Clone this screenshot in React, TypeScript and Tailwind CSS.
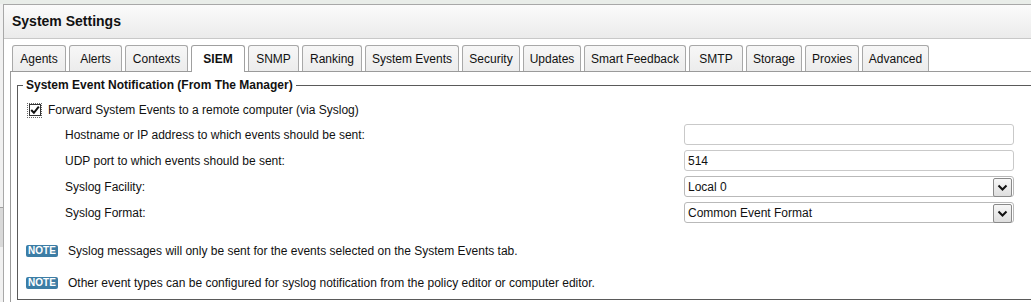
import React from "react";

const tabs = [
  { label: "Agents", w: "w-[54px]" },
  { label: "Alerts", w: "w-[53px]" },
  { label: "Contexts", w: "w-[63px]" },
  { label: "SIEM", w: "w-[54px]", active: true },
  { label: "SNMP", w: "w-[51px]" },
  { label: "Ranking", w: "w-[60px]" },
  { label: "System Events", w: "w-[94px]" },
  { label: "Security", w: "w-[58px]" },
  { label: "Updates", w: "w-[58px]" },
  { label: "Smart Feedback", w: "w-[102px]" },
  { label: "SMTP", w: "w-[54px]" },
  { label: "Storage", w: "w-[56px]" },
  { label: "Proxies", w: "w-[54px]" },
  { label: "Advanced", w: "w-[67px]" },
];

const Chevron = () => (
  <span className="absolute right-[1px] top-[1px] flex h-[19px] w-[19px] items-center justify-center rounded-[2px] border border-[#8a8a8a] bg-gradient-to-b from-[#f7f7f7] to-[#dedede]">
    <svg width="13" height="13" viewBox="0 0 13 13">
      <path d="M2.5 4.5 L6.5 8.5 L10.5 4.5" fill="none" stroke="#111" strokeWidth="2" />
    </svg>
  </span>
);

const TextBox = ({ value }: { value?: string }) => (
  <div className="flex h-[21px] w-[330px] items-center rounded-[3px] border border-[#c9c9c9] bg-white pl-[3px] text-[12px] text-[#111]">
    {value}
  </div>
);

const SelectBox = ({ value }: { value: string }) => (
  <div className="relative flex h-[21px] w-[330px] items-center rounded-[3px] border border-[#b9b9b9] bg-white pl-[3px] text-[12px] text-[#111]">
    {value}
    <Chevron />
  </div>
);

const Note = ({ children }: { children: React.ReactNode }) => (
  <div className="flex h-[16px] items-center pl-[8px]">
    <span className="flex h-[12px] w-[32px] items-center justify-center rounded-[2px] bg-[#3c7da5] text-[10px] font-bold leading-none text-white">
      NOTE
    </span>
    <span className="ml-[10px] text-[12px] text-[#111]">{children}</span>
  </div>
);

export default function App() {
  const rows: [string, React.ReactNode][] = [
    ["Hostname or IP address to which events should be sent:", <TextBox />],
    ["UDP port to which events should be sent:", <TextBox value="514" />],
    ["Syslog Facility:", <SelectBox value="Local 0" />],
    ["Syslog Format:", <SelectBox value="Common Event Format" />],
  ];

  return (
    <div className="h-[302px] w-[1031px] overflow-hidden bg-white font-['Liberation_Sans',Arial,sans-serif] text-[#111]">
      <div className="h-[4px] bg-[#e9ede9]" />
      <div className="flex h-[298px]">
        <div className="flex w-[3px] shrink-0 flex-col bg-[#f1f1f1]">
          <div className="h-[203px] shrink-0" />
          <div className="h-[40px] shrink-0 border-t border-[#a0a0a0] bg-[#d9d9d9]" />
        </div>
        <div className="flex min-w-0 flex-1 flex-col border-l border-t border-[#a8a8a8]">
          <div className="flex h-[34px] shrink-0 items-center border-b border-[#c8c8c8] bg-gradient-to-b from-[#fbfbfb] to-[#ebebeb] pl-[8px] text-[14px] font-bold text-[#111]">
            System Settings
          </div>

          <div className="ml-[6px] mt-[6px] flex min-h-0 flex-1 flex-col">
            <div className="flex h-[26px] shrink-0 items-end gap-[3px] pl-[2px]">
              {tabs.map((t) =>
                t.active ? (
                  <div
                    key={t.label}
                    className={`${t.w} relative z-10 -mb-px flex h-[27px] shrink-0 items-center justify-center rounded-t-[3px] border border-b-0 border-[#a0a0a0] bg-white pb-px text-[12px] font-bold text-[#111]`}
                  >
                    {t.label}
                  </div>
                ) : (
                  <div
                    key={t.label}
                    className={`${t.w} flex h-[26px] shrink-0 items-center justify-center rounded-t-[3px] border border-b-0 border-[#a8a8a8] bg-gradient-to-b from-[#f7f7f7] to-[#ececec] text-[12px] text-[#111]`}
                  >
                    {t.label}
                  </div>
                )
              )}
            </div>

            <div className="min-h-0 flex-1 border-l border-t border-[#9a9a9a] bg-white pl-[6px] pt-[6px]">
              <fieldset className="w-[1040px] border border-[#5a5a5a] pb-[8px]">
                <legend className="ml-[5px] px-[3px] text-[12px] font-bold leading-[14px] text-[#111]">
                  System Event Notification (From The Manager)
                </legend>

                <div className="mt-[10px] flex h-[16px] items-center pl-[9px]">
                  <span className="flex h-[15px] w-[15px] items-center justify-center border border-dotted border-[#666] bg-white">
                    <span className="flex h-[12px] w-[12px] items-center justify-center border border-[#333]">
                      <svg width="10" height="10" viewBox="0 0 10 10">
                        <path d="M1.2 5 L3.9 7.8 L8.8 1.6" fill="none" stroke="#111" strokeWidth="2" />
                      </svg>
                    </span>
                  </span>
                  <span className="ml-[6px] text-[12px]">
                    Forward System Events to a remote computer (via Syslog)
                  </span>
                </div>

                <div className="mt-[6px] flex flex-col gap-[5px] pl-[47px]">
                  {rows.map(([label, field]) => (
                    <div key={label} className="flex h-[21px] items-center">
                      <div className="w-[619px] text-[12px]">{label}</div>
                      {field}
                    </div>
                  ))}
                </div>

                <div className="mt-[20px] flex flex-col gap-[16px]">
                  <Note>Syslog messages will only be sent for the events selected on the System Events tab.</Note>
                  <Note>Other event types can be configured for syslog notification from the policy editor or computer editor.</Note>
                </div>
              </fieldset>
            </div>
          </div>
        </div>
      </div>
    </div>
  );
}
